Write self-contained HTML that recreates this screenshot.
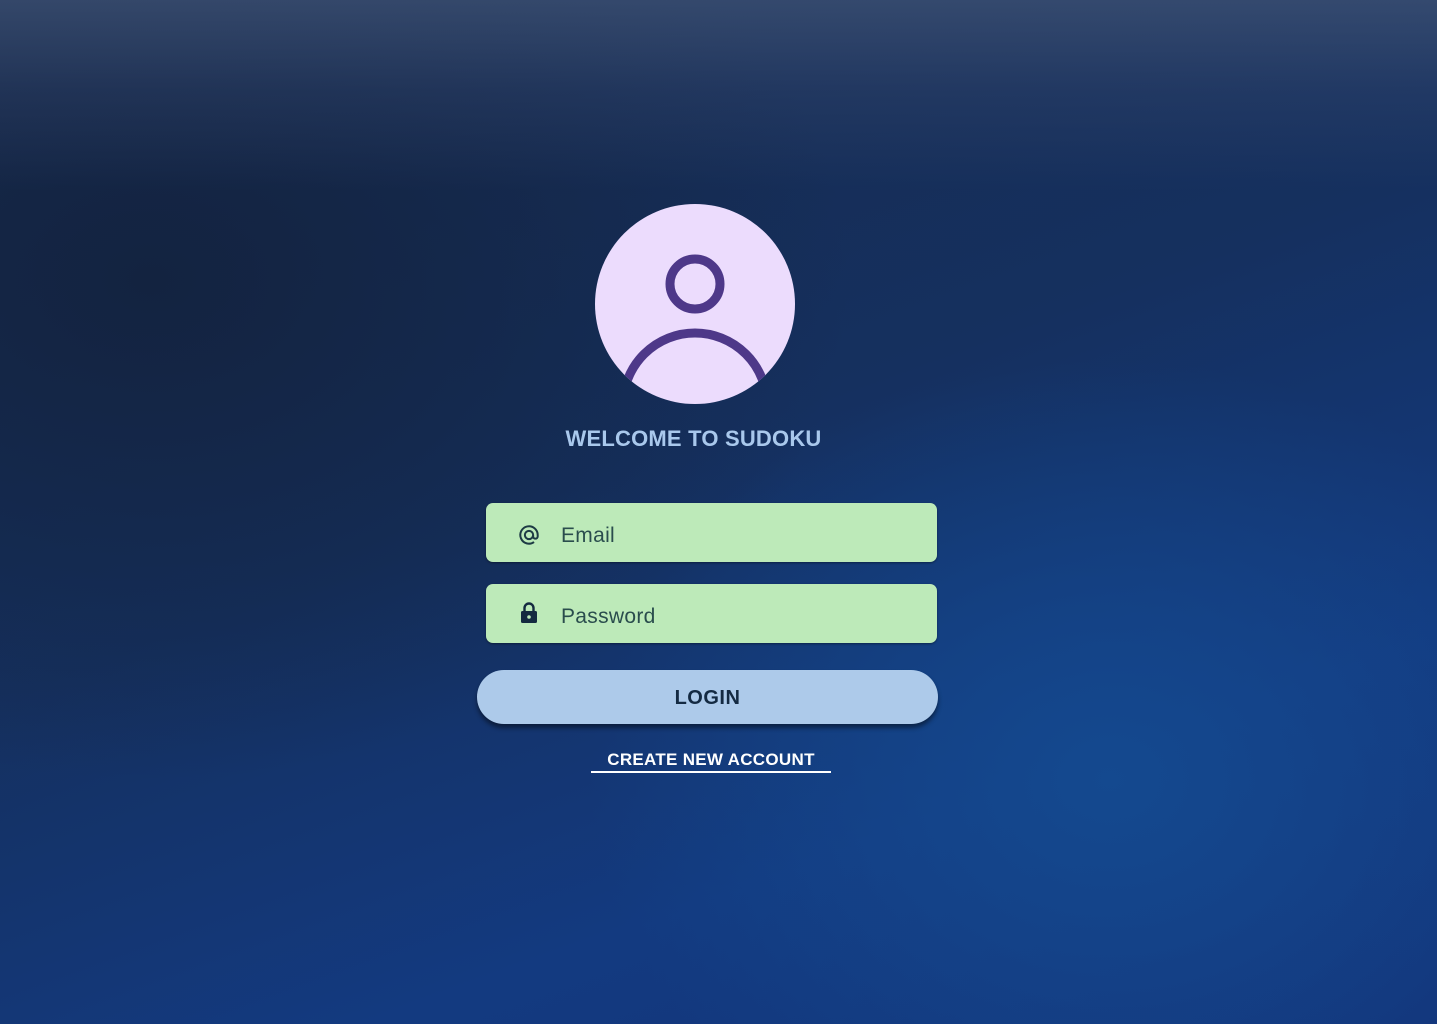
<!DOCTYPE html>
<html><head><meta charset="utf-8"><style>
html,body{margin:0;padding:0;width:1437px;height:1024px;overflow:hidden}
body{position:relative;font-family:"Liberation Sans",sans-serif;
background:
linear-gradient(180deg,rgba(65,85,120,0.7) 0px,rgba(55,75,115,0.35) 90px,rgba(0,0,0,0) 190px),
radial-gradient(ellipse 520px 420px at 1110px 780px,#14498f 0%,rgba(20,73,143,0) 100%),
radial-gradient(ellipse 700px 500px at 150px 280px,#132340 0%,rgba(19,35,64,0) 100%),
linear-gradient(160deg,#172a4c 0%,#15305f 45%,#133a80 75%,#13347a 100%);}
.avatar{position:absolute;left:595px;top:204px;width:200px;height:200px}
.title{position:absolute;left:0;width:1387px;top:426px;text-align:center;color:#a9c8ec;font-size:22px;font-weight:bold;letter-spacing:0.2px}
.field{position:absolute;left:486px;width:451px;height:59px;background:#bdeab9;border-radius:7px;box-shadow:0 1px 2px rgba(0,0,0,.4)}
.field span{position:absolute;left:75px;top:21px;font-size:21px;color:#2a4d4d;letter-spacing:.3px}
.btn{position:absolute;left:477px;top:670px;width:461px;height:54px;border-radius:27px;background:#adcaea;box-shadow:0 4px 5px rgba(0,0,0,.45);text-align:center;line-height:56px;font-weight:bold;font-size:20px;color:#142a42;letter-spacing:.5px}
.link{position:absolute;left:591px;top:750px;width:240px;text-align:center;color:#fff;font-weight:bold;font-size:17px;letter-spacing:.3px;padding-bottom:1px;border-bottom:2px solid #fff}
</style></head><body>
<svg class="avatar" viewBox="0 0 200 200">
<defs><clipPath id="c"><circle cx="100" cy="100" r="100"/></clipPath></defs>
<circle cx="100" cy="100" r="100" fill="#ecdcfd"/>
<g clip-path="url(#c)" fill="none" stroke="#4e3889" stroke-width="9">
<circle cx="100" cy="80" r="25"/>
<circle cx="100" cy="201" r="72"/>
</g>
</svg>
<div class="title">WELCOME TO SUDOKU</div>
<div class="field" style="top:503px">
<svg style="position:absolute;left:32px;top:21px" width="22" height="22" viewBox="0 0 24 24"><path d="M16.5 12a4.5 4.5 0 1 1-9 0a4.5 4.5 0 1 1 9 0v1.5a2.5 2.5 0 0 0 5 0V12a9.5 9.5 0 1 0-4 7.7" fill="none" stroke="#1d3a44" stroke-width="2.2"/></svg>
<span>Email</span></div>
<div class="field" style="top:584px">
<svg style="position:absolute;left:34px;top:18px" width="18" height="22" viewBox="0 0 18 22"><path d="M4.5 9V6a4.5 4.5 0 0 1 9 0v3" fill="none" stroke="#142a40" stroke-width="2.4"/><rect x="1" y="9" width="16" height="12" rx="1.5" fill="#142a40"/><circle cx="9" cy="15" r="1.8" fill="#bdeab9"/></svg>
<span>Password</span></div>
<div class="btn">LOGIN</div>
<div class="link">CREATE NEW ACCOUNT</div>
</body></html>
